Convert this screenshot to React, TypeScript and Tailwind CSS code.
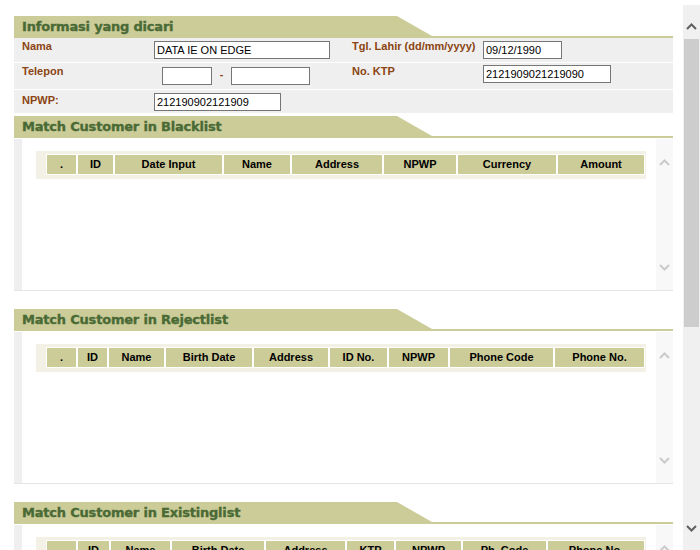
import React from 'react';

type Col = { label: string; w: string };

const blacklistCols: Col[] = [
  { label: '.', w: 'w-[31px]' },
  { label: 'ID', w: 'w-[37px]' },
  { label: 'Date Input', w: 'w-[109px]' },
  { label: 'Name', w: 'w-[68px]' },
  { label: 'Address', w: 'w-[92px]' },
  { label: 'NPWP', w: 'w-[74px]' },
  { label: 'Currency', w: 'w-[100px]' },
  { label: 'Amount', w: 'w-[88px]' },
];

const rejectCols: Col[] = [
  { label: '.', w: 'w-[31px]' },
  { label: 'ID', w: 'w-[31px]' },
  { label: 'Name', w: 'w-[57px]' },
  { label: 'Birth Date', w: 'w-[88px]' },
  { label: 'Address', w: 'w-[76px]' },
  { label: 'ID No.', w: 'w-[59px]' },
  { label: 'NPWP', w: 'w-[61px]' },
  { label: 'Phone Code', w: 'w-[105px]' },
  { label: 'Phone No.', w: 'w-[91px]' },
];

const existingCols: Col[] = [
  { label: '.', w: 'w-[31px]' },
  { label: 'ID', w: 'w-[33px]' },
  { label: 'Name', w: 'w-[61px]' },
  { label: 'Birth Date', w: 'w-[94px]' },
  { label: 'Address', w: 'w-[81px]' },
  { label: 'KTP', w: 'w-[49px]' },
  { label: 'NPWP', w: 'w-[67px]' },
  { label: 'Ph. Code', w: 'w-[85px]' },
  { label: 'Phone No.', w: 'w-[98px]' },
];

const Chevron = ({ up, color }: { up: boolean; color: string }) => (
  <svg width="11" height="7" viewBox="0 0 11 7" className="block shrink-0">
    <polyline
      points={up ? '1,6 5.5,1.5 10,6' : '1,1 5.5,5.5 10,1'}
      fill="none"
      stroke={color}
      strokeWidth="2"
    />
  </svg>
);

// Olive tab header with the sloped edge and the underline running right
const SectionHeader = ({ title }: { title: string }) => (
  <div className="flex h-[22px]">
    <div className="w-[383px] h-[22px] bg-[#cccc99] pl-[8px] pt-[1px]">
      <span className="block h-[20px] leading-[20px] text-[13px] font-bold tracking-[-0.2px] text-[#4a6a35] [-webkit-text-stroke:0.35px_#4a6a35] font-['DejaVu_Sans',sans-serif]">
        {title}
      </span>
    </div>
    <svg width="35" height="22" viewBox="0 0 35 22" className="block shrink-0">
      <polygon points="0,0 35,20 35,22 0,22" fill="#cccc99" />
    </svg>
    <div className="flex-1 flex flex-col justify-end">
      <div className="h-[2px] bg-[#cccc99]" />
    </div>
  </div>
);

const ResultPanel = ({ cols }: { cols: Col[] }) => (
  <div className="mt-px flex h-[152px] border-b border-[#e5e5e5]">
    <div className="w-[8px] bg-[#efefef]" />
    <div className="flex-1 bg-white pl-[14px] pt-[12px]">
      <div className="w-[610px] bg-[#f3f0e5] pl-[10px] pr-[1px] pt-[3px] pb-[4px]">
        <div className="flex">
          {cols.map((c, i) => (
            <div
              key={i}
              className={`${c.w} h-[21px] border border-white bg-[#cccc99] flex items-center justify-center text-[11px] font-bold text-black font-['Liberation_Sans',Arial,sans-serif]`}
            >
              {c.label}
            </div>
          ))}
        </div>
      </div>
    </div>
    <div className="w-[17px] bg-[#f8f8f8] flex flex-col items-center justify-between pt-[20px] pb-[19px]">
      <Chevron up color="#cbcbcb" />
      <Chevron up={false} color="#cbcbcb" />
    </div>
  </div>
);

const Label = ({ text, pad }: { text: string; pad: string }) => (
  <div
    className={`${pad} pl-[8px] text-[11px] leading-[13px] font-bold text-[#8b4513] font-['Liberation_Sans',Arial,sans-serif]`}
  >
    {text}
  </div>
);

const Field = ({ value, w }: { value: string; w: string }) => (
  <input
    readOnly
    value={value}
    className={`${w} h-[18px] block border border-[#767676] bg-white px-[2px] text-[11px] text-black outline-none font-['Liberation_Sans',Arial,sans-serif]`}
  />
);

export default function App() {
  return (
    <div className="flex w-[700px] h-[550px] overflow-hidden bg-white">
      <div className="w-[683px] shrink-0 pl-[14px] pr-[10px] pt-[16px]">
        {/* Informasi yang dicari */}
        <SectionHeader title="Informasi yang dicari" />
        <div className="bg-[#efefef] mb-[3px]">
          <div className="grid grid-cols-[140px_190px_139px_190px] h-[25px] border-b border-white">
            <Label text="Nama" pad="pt-[2px]" />
            <div className="pt-[3px]">
              <Field value="DATA IE ON EDGE" w="w-[176px]" />
            </div>
            <Label text="Tgl. Lahir (dd/mm/yyyy)" pad="pt-[2px]" />
            <div className="pt-[3px]">
              <Field value="09/12/1990" w="w-[79px]" />
            </div>
          </div>
          <div className="grid grid-cols-[140px_190px_139px_190px] h-[27px] border-b border-white">
            <Label text="Telepon" pad="pt-[2px]" />
            <div className="pt-[4px] pl-[8px] flex items-start">
              <Field value="" w="w-[50px]" />
              <span className="w-[19px] text-center text-[11px] leading-[14px] font-bold text-[#8b4513] font-['Liberation_Sans',Arial,sans-serif]">
                -
              </span>
              <Field value="" w="w-[79px]" />
            </div>
            <Label text="No. KTP" pad="pt-[2px]" />
            <div className="pt-[2px]">
              <Field value="2121909021219090" w="w-[128px]" />
            </div>
          </div>
          <div className="grid grid-cols-[140px_190px_139px_190px] h-[23px]">
            <Label text="NPWP:" pad="pt-[4px]" />
            <div className="pt-[3px]">
              <Field value="212190902121909" w="w-[127px]" />
            </div>
            <div />
            <div />
          </div>
        </div>

        <SectionHeader title="Match Customer in Blacklist" />
        <ResultPanel cols={blacklistCols} />

        <div className="mt-[18px]">
          <SectionHeader title="Match Customer in Rejectlist" />
          <ResultPanel cols={rejectCols} />
        </div>

        <div className="mt-[18px]">
          <SectionHeader title="Match Customer in Existinglist" />
          <ResultPanel cols={existingCols} />
        </div>
      </div>

      {/* Page scrollbar */}
      <div className="w-[17px] shrink-0 mt-[5px] bg-[#f0f0f0] flex flex-col items-center pt-[18px] pb-[18px]">
        <Chevron up color="#606060" />
        <div className="mt-[9px] w-[15px] h-[288px] bg-[#cdcdcd]" />
        <div className="flex-1" />
        <Chevron up={false} color="#606060" />
      </div>
    </div>
  );
}
